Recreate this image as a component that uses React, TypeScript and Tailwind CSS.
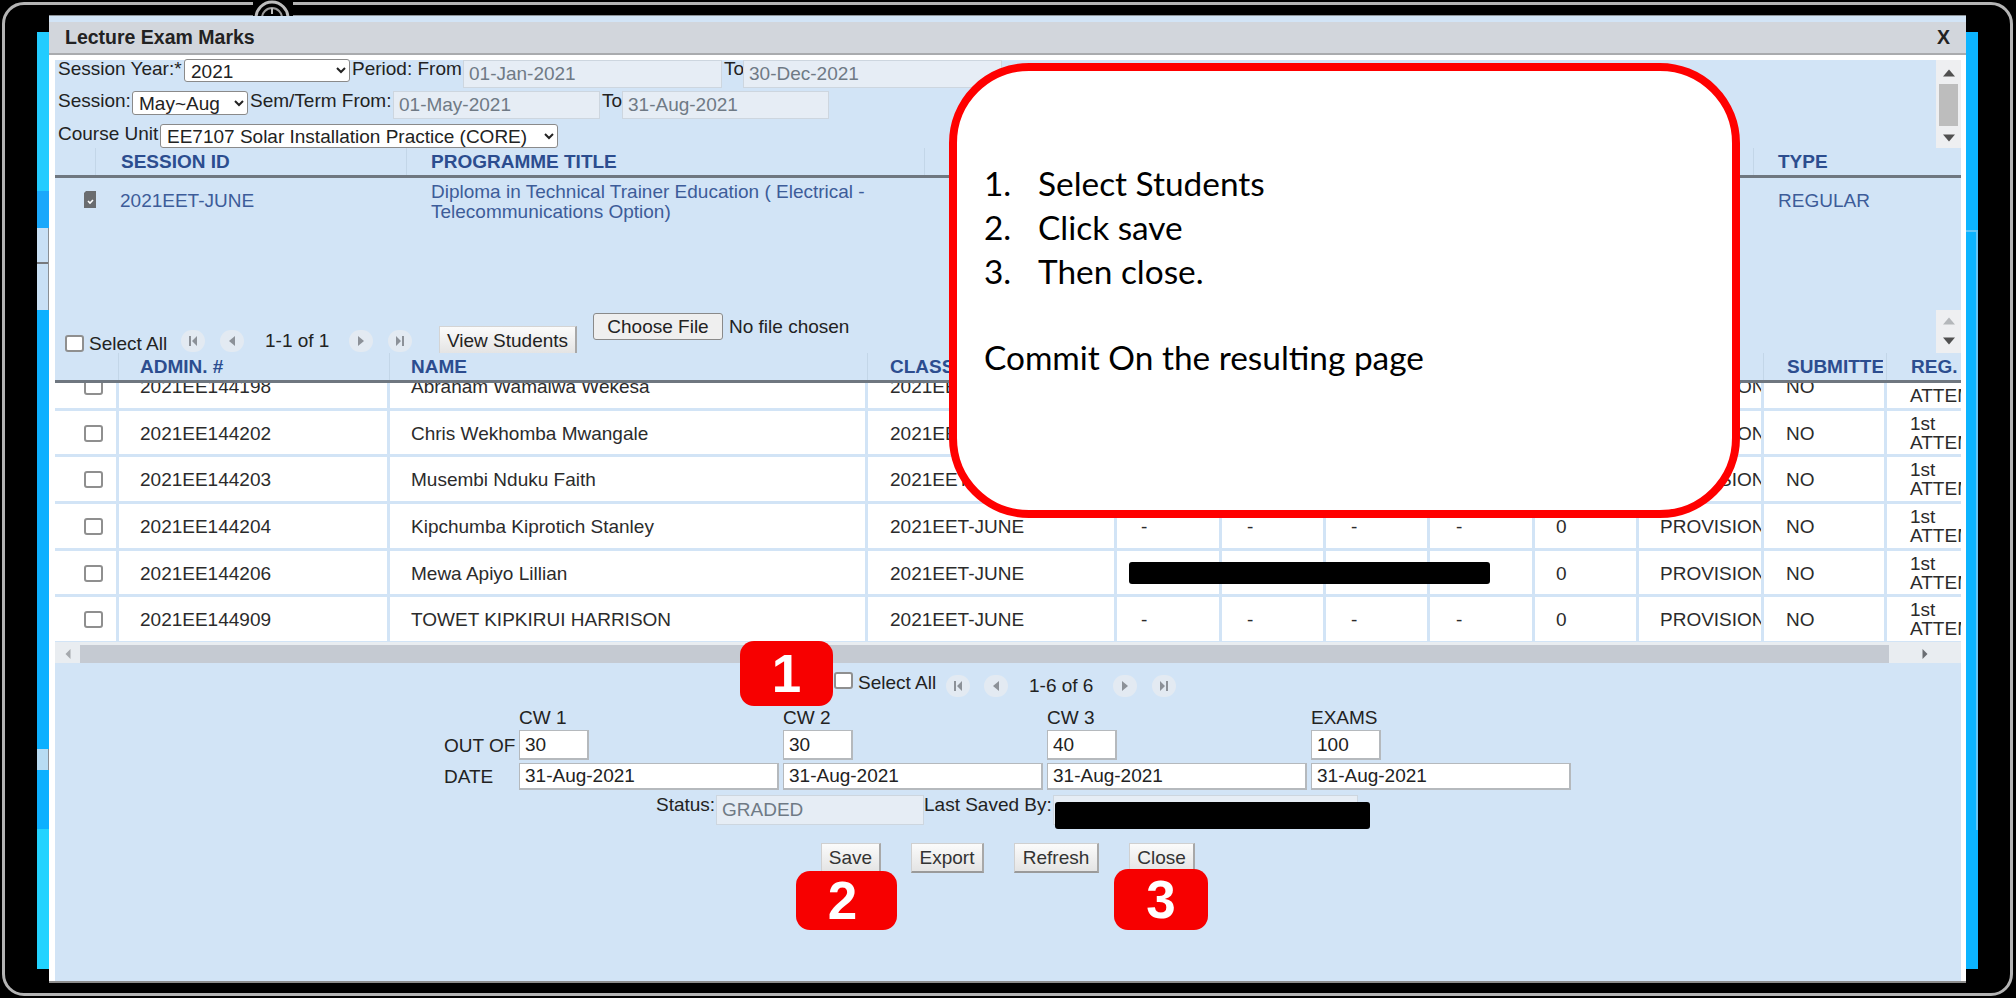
import type { ReactNode } from "react";

const ARIAL = "font-['Liberation_Sans',Arial,sans-serif]";

const COLS =
  "grid-cols-[64px_271px_478px_249px_105px_104px_104px_105px_104px_125px_123px_74px]";

const students = [
  { id: "2021EE144198", name: "Abraham Wamalwa Wekesa" },
  { id: "2021EE144202", name: "Chris Wekhomba Mwangale" },
  { id: "2021EE144203", name: "Musembi Nduku Faith" },
  { id: "2021EE144204", name: "Kipchumba Kiprotich Stanley" },
  { id: "2021EE144206", name: "Mewa Apiyo Lillian" },
  { id: "2021EE144909", name: "TOWET KIPKIRUI HARRISON" },
];

function Label({ children, className = "" }: { children: ReactNode; className?: string }) {
  return <span className={`whitespace-nowrap leading-[19px] text-[#222] ${className}`}>{children}</span>;
}

function ReadOnly({ value, className = "" }: { value: string; className?: string }) {
  return (
    <input
      readOnly
      value={value}
      className={`h-[28px] border border-[#cdd6df] bg-[#e6edf5] px-[5px] text-[19px] text-[#6f7a85] outline-none ${className}`}
    />
  );
}

function Field({ value, className = "" }: { value: string; className?: string }) {
  return (
    <input
      readOnly
      value={value}
      className={`border border-[#b5b9bd] border-b-2 border-r-2 bg-white px-[5px] text-[19px] text-[#222] outline-none ${className}`}
    />
  );
}

function Check({ className = "" }: { className?: string }) {
  return (
    <input
      type="checkbox"
      className={`block h-[17px] w-[19px] appearance-none rounded-[3px] border-2 border-[#8f8f8f] bg-white ${className}`}
    />
  );
}

function Pager({ kind }: { kind: "first" | "prev" | "next" | "last" }) {
  return (
    <span className="flex h-[22px] w-[24px] shrink-0 items-center justify-center rounded-full bg-[#e3eaf2]">
      <svg width="10" height="12" viewBox="0 0 10 12" fill="#8c9198">
        {kind === "first" && <path d="M1 1h2v10H1zM9 1v10L4 6z" />}
        {kind === "prev" && <path d="M8 1v10L2 6z" />}
        {kind === "next" && <path d="M2 1v10l6-5z" />}
        {kind === "last" && <path d="M7 1h2v10H7zM1 1v10l5-5z" />}
      </svg>
    </span>
  );
}

function Button({ children, className = "" }: { children: ReactNode; className?: string }) {
  return (
    <button className={`h-[30px] border border-[#d0d0d0] border-b-2 border-r-2 border-b-[#9a9a9a] border-r-[#a8a8a8] bg-linear-to-b from-[#fbfbfb] to-[#e4e4e4] text-[19px] leading-none text-[#333] ${className}`}>
      {children}
    </button>
  );
}

function Badge({ n, className }: { n: number; className: string }) {
  return (
    <div className={`absolute flex items-center justify-center rounded-[14px] bg-[#f70000] text-[53px] font-bold leading-none text-white ${className}`}>
      {n}
    </div>
  );
}

function VScroll({ children, className = "" }: { children: ReactNode; className?: string }) {
  return <div className={`flex w-[25px] shrink-0 flex-col items-center bg-[#eeeff1] ${className}`}>{children}</div>;
}

function Arrow({ dir, color = "#505050" }: { dir: "up" | "down" | "left" | "right"; color?: string }) {
  const d = { up: "M0 8L6 1l6 7z", down: "M0 1h12L6 8z", left: "M8 0v12L2 6z", right: "M2 0v12l6-6z" }[dir];
  return (
    <svg width="12" height="10" viewBox={dir === "up" || dir === "down" ? "0 0 12 9" : "0 0 10 12"} fill={color}>
      <path d={d} />
    </svg>
  );
}

function HeadCell({ children, className = "" }: { children?: ReactNode; className?: string }) {
  return (
    <div className={`overflow-hidden whitespace-nowrap pt-[4px] font-bold leading-[19px] text-[#2c4d8f] ${className}`}>
      {children}
    </div>
  );
}

function Cell({ children, className = "" }: { children?: ReactNode; className?: string }) {
  return (
    <div className={`flex items-center overflow-hidden whitespace-nowrap border-r-[3px] border-[#d2e4f6] pt-[1px] leading-[19px] text-[#2b2b2b] ${className}`}>
      {children}
    </div>
  );
}

function Strip({ side }: { side: "left" | "right" }) {
  if (side === "right") {
    return (
      <div className="mt-[32px] flex h-[937px] w-[12px] shrink-0 flex-col bg-[#0cb4ff]">
        <div className="mt-[198px] h-[600px] border-r-2 border-t-2 border-[#63c6f7]" />
      </div>
    );
  }
  return (
    <div className="mt-[32px] flex h-[937px] w-[12px] shrink-0 flex-col">
      <div className="h-[159px] bg-[#22ccff]" />
      <div className="h-[37px] bg-[#1aa8fb]" />
      <div className="h-[82px] border-r border-[#8a8f95] bg-[#c9e0f5]">
        <div className="mt-[34px] h-[2px] bg-[#77797c]" />
      </div>
      <div className="h-[439px] bg-[#0cb0ff]" />
      <div className="h-[21px] border-r border-[#8a8f95] bg-[#b8dcf3]" />
      <div className="h-[59px] bg-[#0cb0ff]" />
      <div className="h-[140px] bg-[#22d3ff]" />
    </div>
  );
}

export default function App() {
  return (
    <div className={`relative flex h-[998px] w-[2016px] overflow-hidden bg-black pl-[37px] text-[19px] ${ARIAL}`}>
      <Strip side="left" />

      <div className="mt-[15px] flex h-[968px] w-[1917px] shrink-0 flex-col border-b-2 border-[#8d8d8d] bg-white">
        <div className="h-[7px] shrink-0 border-t border-[#8d9297] bg-[#d2e4f6]" />
        <div className="flex h-[33px] shrink-0 items-center justify-between border-b-2 border-[#a9abae] bg-[#d2d6dc] pl-[16px] pr-[16px] text-[19.5px] font-bold text-[#222]">
          <span>Lecture Exam Marks</span>
          <span>X</span>
        </div>

        <div className="ml-[6px] mr-[5px] mt-[5px] flex min-h-0 flex-1 flex-col bg-[#d2e4f6]">
          {/* filters */}
          <div className="flex h-[88px] shrink-0 justify-between">
            <div className="pl-[3px]">
              <div className="flex h-[31px] items-start">
                <Label className="mt-[-1px] w-[126px]">Session Year:*</Label>
                <select className="-mt-px h-[23px] w-[166px] rounded-[3px] border border-[#8a8a8a] bg-white pl-[2px] text-[19px] leading-none text-[#222]">
                  <option>2021</option>
                </select>
                <Label className="ml-[2px] mt-[-1px] w-[111px]">Period: From</Label>
                <ReadOnly value="01-Jan-2021" className="h-[27px] w-[259px]" />
                <Label className="ml-[2px] mt-[-1px] w-[19px]">To</Label>
                <ReadOnly value="30-Dec-2021" className="h-[27px] w-[259px]" />
              </div>
              <div className="flex h-[33px] items-start">
                <Label className="w-[74px]">Session:</Label>
                <select className="h-[24px] w-[116px] rounded-[3px] border border-[#8a8a8a] bg-white pl-[2px] text-[19px] leading-none text-[#222]">
                  <option>May~Aug</option>
                </select>
                <Label className="ml-[2px] w-[143px]">Sem/Term From:</Label>
                <ReadOnly value="01-May-2021" className="w-[207px]" />
                <Label className="ml-[2px] w-[20px]">To</Label>
                <ReadOnly value="31-Aug-2021" className="w-[207px]" />
              </div>
              <div className="flex items-start">
                <Label className="w-[102px]">Course Unit</Label>
                <select className="h-[24px] w-[398px] rounded-[3px] border border-[#8a8a8a] bg-white pl-[2px] text-[19px] leading-none text-[#222]">
                  <option>EE7107 Solar Installation Practice (CORE)</option>
                </select>
              </div>
            </div>
            <VScroll className="h-[88px] pt-[8px]">
              <Arrow dir="up" />
              <div className="mt-[6px] h-[42px] w-[19px] bg-[#bdbdbd]" />
              <div className="mt-[7px]">
                <Arrow dir="down" />
              </div>
            </VScroll>
          </div>

          {/* programme table */}
          <div className="flex h-[30px] shrink-0 border-b-[3px] border-[#6f7780]">
            <HeadCell className="w-[41px] border-r border-[#c3d6e8]" />
            <HeadCell className="w-[311px] border-r border-[#c3d6e8] pl-[25px]">SESSION ID</HeadCell>
            <HeadCell className="w-[518px] border-r border-[#c3d6e8] pl-[24px]">PROGRAMME TITLE</HeadCell>
            <HeadCell className="w-[829px] border-r border-[#c3d6e8]" />
            <HeadCell className="pl-[24px]">TYPE</HeadCell>
          </div>
          <div className="flex h-[132px] shrink-0 text-[#3d5c99]">
            <div className="w-[65px] pl-[29px] pt-[13px]">
              <svg width="12" height="17" viewBox="0 0 12 17">
                <path d="M0 2l2-2h10v17H0z" fill="#6a6c6f" />
                <path d="M4 10l2 2 3-3" fill="none" stroke="#fff" strokeWidth="1.6" />
              </svg>
            </div>
            <div className="w-[311px] pt-[13px] leading-[19px]">2021EET-JUNE</div>
            <div className="w-[1347px] pt-[4px] leading-[20px]">
              Diploma in Technical Trainer Education ( Electrical -
              <br />
              Telecommunications Option)
            </div>
            <div className="pt-[13px] leading-[19px]">REGULAR</div>
          </div>

          {/* students toolbar */}
          <div className="flex h-[43px] shrink-0 text-[#222]">
            <Check className="ml-[10px] mt-[25px] mr-[5px]" />
            <span className="mt-[24px] w-[92px] whitespace-nowrap leading-[19px]">Select All</span>
            <div className="mt-[20px] flex items-start">
              <Pager kind="first" />
              <span className="ml-[15px]"><Pager kind="prev" /></span>
              <span className="ml-[21px] w-[85px] whitespace-nowrap leading-[22px]">1-1 of 1</span>
              <span className="ml-[-1px]"><Pager kind="next" /></span>
              <span className="ml-[15px]"><Pager kind="last" /></span>
            </div>
            <button className="ml-[27px] mt-[16px] h-[27px] w-[138px] border border-b-0 border-[#d4d4d4] border-r-2 border-r-[#a8a8a8] bg-linear-to-b from-[#fbfbfb] to-[#e4e4e4] leading-none text-[#222]">
              View Students
            </button>
            <button className="ml-[16px] mt-[3px] h-[27px] w-[130px] rounded-[3px] border border-[#8a8a8a] bg-[#efefef] leading-none text-[#222]">
              Choose File
            </button>
            <span className="ml-[6px] mt-[7px] min-w-0 flex-1 whitespace-nowrap leading-[19px]">No file chosen</span>
            <VScroll className="h-[43px] pt-[6px]">
              <Arrow dir="up" color="#b4b7ba" />
              <div className="mt-[10px]">
                <Arrow dir="down" />
              </div>
            </VScroll>
          </div>

          {/* students table */}
          <div className={`grid h-[30px] shrink-0 border-b-[3px] border-[#6f7780] ${COLS}`}>
            <HeadCell className="border-r border-[#c3d6e8]" />
            <HeadCell className="border-r border-[#c3d6e8] pl-[21px]">ADMIN. #</HeadCell>
            <HeadCell className="border-r border-[#c3d6e8] pl-[21px]">NAME</HeadCell>
            <HeadCell className="pl-[22px]">CLASS</HeadCell>
            <HeadCell />
            <HeadCell />
            <HeadCell />
            <HeadCell />
            <HeadCell />
            <HeadCell className="border-r border-[#c3d6e8]" />
            <HeadCell className="border-r border-[#c3d6e8] pl-[23px]">
              <span className="block w-[96px] overflow-hidden">SUBMITTED</span>
            </HeadCell>
            <HeadCell className="pl-[24px]">REG.</HeadCell>
          </div>
          <div className="h-[259px] shrink-0 overflow-hidden bg-white">
            <div className="-mt-[19px]">
              {students.map((s) => (
                <div key={s.id} className={`grid h-[46.7px] border-b-[3px] border-[#d2e4f6] ${COLS}`}>
                  <Cell className="pl-[29px]">
                    <Check />
                  </Cell>
                  <Cell className="pl-[21px]">{s.id}</Cell>
                  <Cell className="pl-[21px]">{s.name}</Cell>
                  <Cell className="pl-[22px]">2021EET-JUNE</Cell>
                  <Cell className="pl-[24px]">-</Cell>
                  <Cell className="pl-[25px]">-</Cell>
                  <Cell className="pl-[25px]">-</Cell>
                  <Cell className="pl-[26px]">-</Cell>
                  <Cell className="pl-[21px]">0</Cell>
                  <Cell className="pl-[21px]">PROVISIONAL</Cell>
                  <Cell className="pl-[22px]">NO</Cell>
                  <div className="overflow-hidden whitespace-nowrap pl-[23px] pt-[3px] leading-[19px] text-[#2b2b2b]">
                    1st
                    <br />
                    ATTEMPT
                  </div>
                </div>
              ))}
            </div>
          </div>
          <div className="flex h-[21px] shrink-0 items-center bg-[#e9edf1] pt-[3px]">
            <div className="flex w-[25px] justify-center">
              <Arrow dir="left" color="#a5a9ad" />
            </div>
            <div className="h-[18px] w-[1809px] bg-[#c5cad2]" />
            <div className="flex flex-1 justify-center">
              <Arrow dir="right" color="#6a6e73" />
            </div>
          </div>

          {/* marks form */}
          <div className="flex min-h-0 flex-1 flex-col text-[#222]">
            <div className="ml-[779px] mt-[9px] flex h-[36px] shrink-0 items-start">
              <Check />
              <span className="ml-[5px] mt-[1px] w-[88px] whitespace-nowrap leading-[19px]">Select All</span>
              <span className="mt-[3px] flex items-start">
                <Pager kind="first" />
                <span className="ml-[14px]"><Pager kind="prev" /></span>
                <span className="ml-[21px] w-[84px] whitespace-nowrap leading-[22px]">1-6 of 6</span>
                <Pager kind="next" />
                <span className="ml-[15px]"><Pager kind="last" /></span>
              </span>
            </div>

            <div className="ml-[389px] grid grid-cols-[75px_264px_264px_264px_264px] grid-rows-[22px_33px_27px]">
              <span />
              <span className="leading-[19px]">CW 1</span>
              <span className="leading-[19px]">CW 2</span>
              <span className="leading-[19px]">CW 3</span>
              <span className="leading-[19px]">EXAMS</span>
              <span className="self-center whitespace-nowrap pb-[3px] leading-[19px]">OUT OF</span>
              <Field value="30" className="h-[30px] w-[70px]" />
              <Field value="30" className="h-[30px] w-[70px]" />
              <Field value="40" className="h-[30px] w-[70px]" />
              <Field value="100" className="h-[30px] w-[70px]" />
              <span className="self-center leading-[19px]">DATE</span>
              <Field value="31-Aug-2021" className="h-[27px] w-[260px]" />
              <Field value="31-Aug-2021" className="h-[27px] w-[260px]" />
              <Field value="31-Aug-2021" className="h-[27px] w-[260px]" />
              <Field value="31-Aug-2021" className="h-[27px] w-[260px]" />
            </div>

            <div className="ml-[601px] mt-[5px] flex items-start">
              <Label className="w-[60px]">Status:</Label>
              <ReadOnly value="GRADED" className="h-[30px] w-[208px]" />
              <Label className="w-[129px]">Last Saved By:</Label>
              <ReadOnly value="" className="h-[30px] w-[305px]" />
            </div>

            <div className="ml-[766px] mt-[18px] flex gap-[30px]">
              <Button className="w-[60px]">Save</Button>
              <Button className="w-[73px]">Export</Button>
              <Button className="w-[85px]">Refresh</Button>
              <Button className="w-[66px]">Close</Button>
            </div>
          </div>
        </div>
      </div>

      <Strip side="right" />

      {/* screen bezel */}
      <div className="pointer-events-none absolute bottom-[2px] left-[2px] right-[3px] top-[2px] rounded-[22px] border-[3px] border-[#b4b4b4]" />
      <svg className="absolute left-[253px] top-0" width="40" height="16" viewBox="0 0 40 16">
        <rect width="40" height="16" fill="#000" />
        <circle cx="19" cy="18" r="16" fill="none" stroke="#bdbdbd" strokeWidth="3" />
        <circle cx="19" cy="18" r="10" fill="none" stroke="#9a9a9a" strokeWidth="2" />
        <path d="M19 8v6" stroke="#bdbdbd" strokeWidth="2" />
      </svg>

      {/* redactions */}
      <div className="absolute left-[1129px] top-[562px] h-[22px] w-[361px] rounded-[3px] bg-black" />
      <div className="absolute left-[1055px] top-[802px] h-[27px] w-[315px] rounded-[3px] bg-black" />

      {/* instructions */}
      <div className="absolute left-[949px] top-[63px] h-[455px] w-[791px] rounded-[80px] border-8 border-[#ff0000] bg-white pl-[27px] pt-[90px] font-['Lato',sans-serif] text-[33.4px] leading-[44px] text-black">
        <ol>
          <li className="flex"><span className="w-[54px]">1.</span>Select Students</li>
          <li className="flex"><span className="w-[54px]">2.</span>Click save</li>
          <li className="flex"><span className="w-[54px]">3.</span>Then close.</li>
        </ol>
        <p className="mt-[42px]">Commit On the resulting page</p>
      </div>

      <Badge n={1} className="left-[740px] top-[641px] h-[65px] w-[93px]" />
      <Badge n={2} className="left-[796px] top-[871px] h-[59px] w-[101px] pr-[8px]" />
      <Badge n={3} className="left-[1114px] top-[869px] h-[61px] w-[94px]" />
    </div>
  );
}
